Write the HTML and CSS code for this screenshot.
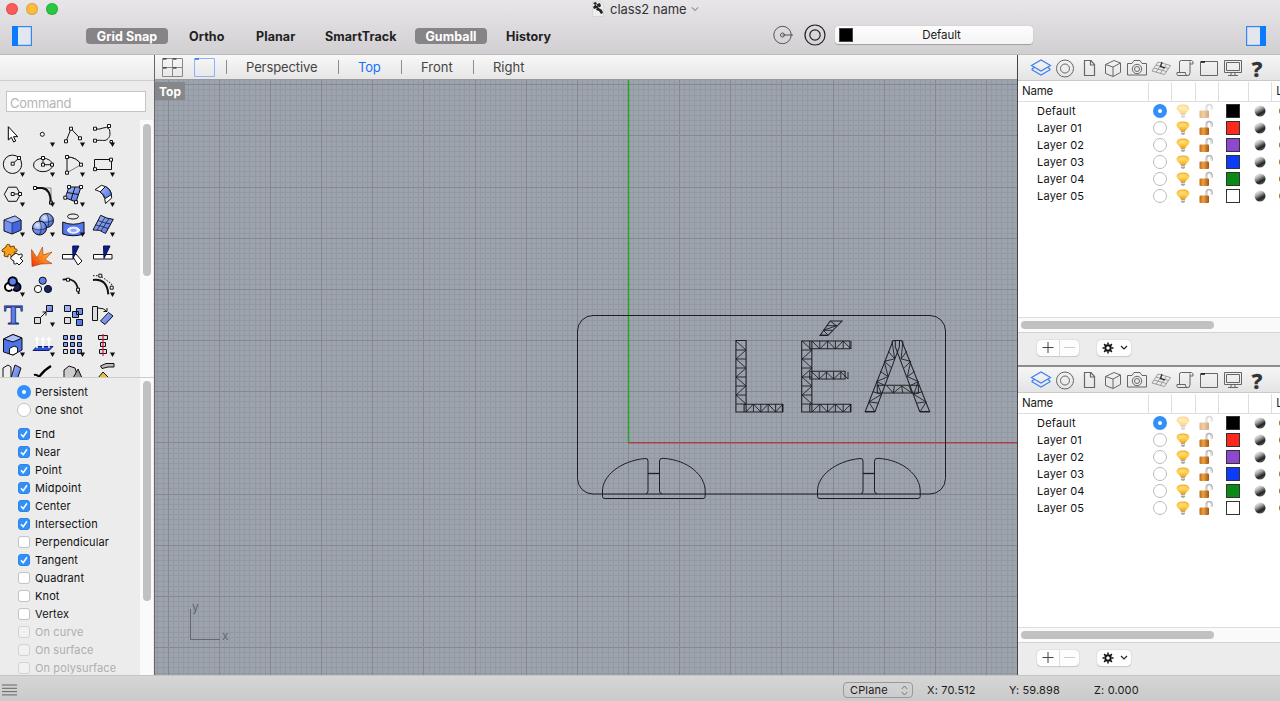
FILE: index.html
```html
<!DOCTYPE html>
<html lang="en">
<head>
<meta charset="utf-8">
<title>class2 name</title>
<link rel="stylesheet" href="styles.css">
</head>
<body>
<svg class="defs" width="0" height="0">
  <defs>
    <linearGradient id="blue" x1="0" y1="0" x2="1" y2="1"><stop offset="0" stop-color="#a9bcfb"/><stop offset="1" stop-color="#4a6ee8"/></linearGradient>
    <radialGradient id="ball" cx=".35" cy=".3" r=".8"><stop offset="0" stop-color="#dfe8ff"/><stop offset=".5" stop-color="#7594f0"/><stop offset="1" stop-color="#3f5fd0"/></radialGradient>
    <linearGradient id="fire" x1="0" y1="1" x2="1" y2="0"><stop offset="0" stop-color="#e8330c"/><stop offset=".5" stop-color="#ff8a1e"/><stop offset="1" stop-color="#ffc23a"/></linearGradient>
    <linearGradient id="sphere" x1=".2" y1="0" x2=".75" y2="1"><stop offset="0" stop-color="#fff"/><stop offset=".35" stop-color="#aaa"/><stop offset=".7" stop-color="#222"/><stop offset="1" stop-color="#666"/></linearGradient>
    <linearGradient id="glass" x1="0" y1="0" x2="0" y2="1"><stop offset="0" stop-color="#f9a51a"/><stop offset=".5" stop-color="#ffd658"/><stop offset="1" stop-color="#f7a21c"/></linearGradient>
    <linearGradient id="brass" x1="0" y1="0" x2="1" y2="0"><stop offset="0" stop-color="#c06a12"/><stop offset=".4" stop-color="#e9a04a"/><stop offset="1" stop-color="#a85408"/></linearGradient>
    <symbol id="bulb" viewBox="0 0 14 16"><path d="M7 1.500C3.400 1.500 .500 3 .500 5.600 .500 7.500 3.600 8.800 4.500 11H9.500C10.400 8.800 13.500 7.500 13.500 5.600 13.500 3 10.600 1.500 7 1.500Z" fill="url(#glass)"/><ellipse cx="6.500" cy="4.200" rx="4" ry="1.800" fill="#ffe9a0" opacity=".5"/><path d="M5 11h4v3L7 15 5 14Z" fill="#a3a3a3"/><path d="M5 12.500h4" stroke="#eee" stroke-width=".8"/></symbol>
    <symbol id="lock" viewBox="0 0 14 16"><path d="M7.500 8V4.500C7.500 .800 12.800 .800 12.800 4.500V6.500" fill="none" stroke="#b0b0b0" stroke-width="2"/><path d="M7.800 8V4.500C7.800 1.500 12.500 1.500 12.500 4.500V6" fill="none" stroke="#efefef" stroke-width=".8"/><rect x=".5" y="7.500" width="9.500" height="7.500" rx="1" fill="url(#brass)"/></symbol>
    <symbol id="tri" viewBox="0 0 30 30"><path d="M20 22.500h5l-2.500 4.500Z" fill="#111" stroke="none"/></symbol>
    <symbol id="gear" viewBox="0 0 12 12"><circle cx="6" cy="6" r="2.700" fill="none" stroke="#111" stroke-width="1.900"/><path d="M6 .5v2M6 9.500v2M.5 6h2M9.500 6h2M2.100 2.100l1.500 1.500M8.400 8.400l1.500 1.500M2.100 9.900l1.500-1.500M8.400 3.600l1.500-1.500" stroke="#111" stroke-width="1.500"/></symbol>
  </defs>
</svg>
<div class="app">
  <header class="titlebar">
    <div class="title-row">
      <div class="lights"><i class="red"></i><i class="yellow"></i><i class="green"></i></div>
      <div class="doc-title">
        <svg width="12" height="16" viewBox="0 0 12 16"><path d="M.5 .5h8l3 3v12H.5Z" fill="#eee" stroke="#ccc" stroke-width=".6"/><path d="M1 2l3-1 1 2 3-1 1 3-2 2 3 2 1 3-2 1-2-3-3-1 1-2-3 1-1-2 2-2Z" fill="#222"/><path d="M4 3l1 2M6 6l2 1" stroke="#ddd"/></svg>
        <span>class2 name</span>
        <svg class="chev" width="8" height="6" viewBox="0 0 8 6"><path d="M.8 1.300L4 4.500 7.200 1.300" fill="none" stroke="#999" stroke-width="1.200"/></svg>
      </div>
    </div>
    <div class="tool-row">
      <svg class="side-l" width="20" height="20"><rect x=".6" y=".6" width="18.800" height="18.800" fill="#e2e6ee" stroke="#3485f5" stroke-width="1.200"/><rect width="6" height="20" fill="#0a7aff"/></svg>
      <div class="modes">
        <b class="pill w82">Grid Snap</b><b class="ortho">Ortho</b><b class="planar">Planar</b><b class="smart">SmartTrack</b><b class="pill w72">Gumball</b><b class="hist">History</b>
      </div>
      <svg class="circ-a" width="22" height="20" viewBox="0 0 22 20" fill="none" stroke="#555"><circle cx="9.500" cy="10" r="8.700"/><circle cx="9.500" cy="10" r="2"/><path d="M9.500 10h10.500"/></svg>
      <svg class="circ-b" width="22" height="22" viewBox="0 0 22 22" fill="none" stroke="#222" stroke-width="1.200"><circle cx="11" cy="11" r="10"/><circle cx="11" cy="11" r="5.200"/></svg>
      <div class="layer-pop"><i></i><span>Default</span></div>
      <svg class="side-r" width="20" height="20"><rect x=".6" y=".6" width="18.800" height="18.800" fill="#e2e6ee" stroke="#3485f5" stroke-width="1.200"/><rect x="14" width="6" height="20" fill="#0a7aff"/></svg>
    </div>
  </header>

  <main class="body">
    <aside class="left">
      <div class="left-top"></div>
      <div class="cmd-wrap"><div class="cmd">Command</div></div>
      <div class="tools-wrap">
        <div class="tools">
          <svg viewBox="0 0 30 30"><path d="M8.300 6.700V20L11.300 17.300 13.700 22 15.700 21 13.500 16.700H17.700Z" fill="#fff" stroke="#000"/></svg>
          <svg viewBox="0 0 30 30"><circle cx="12.300" cy="14.300" r="2" fill="#fff" stroke="#111"/><use href="#tri"/></svg>
          <svg viewBox="0 0 30 30" class="ln"><path d="M6 21.300L11 8.700 20 18.300"/><path class="sq" d="M9.500 7.200h3v3h-3zM4.500 19.800h3v3h-3zM18.500 16.800h3v3h-3z"/><use href="#tri"/></svg>
          <svg viewBox="0 0 30 30" class="ln"><path d="M5 8.700Q9 10 13 8T19.500 9.500C20.500 15 20 17 17 19.500 15 21.500 11 19.500 5 20.700"/><path class="sq" d="M3.500 7.200h3v3h-3zM17.500 4.500h3v3h-3zM3.500 19.200h3v3h-3z"/><path class="sq" d="M20 20.500h2.500v2.500h-2.500z"/><use href="#tri"/></svg>

          <svg viewBox="0 0 30 30" class="ln"><circle cx="12.500" cy="14.300" r="9.200"/><path d="M12.700 13.700L19 8"/><path class="sq" d="M11.200 12.200h3v3h-3zM17.500 6.500h3v3h-3z"/><use href="#tri"/></svg>
          <svg viewBox="0 0 30 30" class="ln"><ellipse cx="13" cy="15" rx="9.500" ry="6.700"/><path d="M13 8v6.700h9"/><path class="sq" d="M11.500 6.500h3v3h-3zM11.500 13.200h3v3h-3zM20.500 13.200h3v3h-3z"/><use href="#tri"/></svg>
          <svg viewBox="0 0 30 30" class="ln"><path d="M7 7V22.700"/><path d="M7 7Q17 7 21 14.700L7 22.700" stroke="#777"/><path d="M7 7Q17 7 21 14.700"/><path class="sq" d="M5.500 5.500h3v3h-3zM19.500 13.200h3v3h-3zM5.500 21.200h3v3h-3z"/><use href="#tri"/></svg>
          <svg viewBox="0 0 30 30" class="ln"><path d="M4.500 9.500h17v10h-17z"/><path class="sq" d="M19.500 8.200h3v3h-3zM3.500 17.700h3v3h-3z"/><use href="#tri"/></svg>

          <svg viewBox="0 0 30 30" class="ln"><path d="M4.300 14.300L8.300 7.200H16.500L20.500 14.300 16.500 21.300H8.300Z"/><path d="M12.700 14h7"/><path class="sq" d="M11.200 12.500h3v3h-3zM18.500 12.500h3v3h-3z"/><use href="#tri"/></svg>
          <svg viewBox="0 0 30 30" class="ln"><path d="M5 8H21V22" stroke="#888"/><path d="M5 8H12Q20.500 9 20.700 22" stroke-width="2"/><path class="sq" d="M3.500 6.500h3v3h-3zM19.500 21.200h3v3h-3z"/><use href="#tri"/></svg>
          <svg viewBox="0 0 30 30" class="ln"><path d="M9 7H21L16 22 5.300 17.700Z" fill="url(#blue)"/><path d="M15 7L11 20M7 12.500L18.500 14.500"/><path class="sq" d="M7.500 5.500h3v3h-3zM19.500 5.500h3v3h-3zM14.500 20.700h3v3h-3zM3.800 16.200h3v3h-3z"/><use href="#tri"/></svg>
          <svg viewBox="0 0 30 30" class="ln"><path d="M5 9.700L11.300 5.300Q22 7 21.700 18L15.500 23.500Q15 12 5 9.700Z" fill="#fff"/><path d="M10 12L15.500 6.500Q21 9.500 21.500 14.500L15.300 18.500Q14 14 10 12Z" fill="url(#blue)"/><use href="#tri"/></svg>

          <svg viewBox="0 0 30 30" class="ln"><path d="M4 10L15 6 21 10V20L12 24 4 21Z" fill="#7391f3"/><path d="M12 13L21 10V20L12 24Z" fill="#4264df" stroke-width=".6"/><path d="M4 10L12 13 21 10L15 6Z" fill="#a8bbfb" stroke-width=".6"/><use href="#tri"/></svg>
          <svg viewBox="0 0 30 30" class="ln"><circle cx="16.500" cy="10.500" r="7" fill="url(#ball)"/><circle cx="9.500" cy="18" r="7" fill="url(#ball)"/><path d="M2.500 18Q9 22 16.500 18M9.500 11Q13 17 9.500 25M10 11Q17 14 23.500 10M16.500 3.500Q20 9 18 17" stroke-width=".6"/><use href="#tri"/></svg>
          <svg viewBox="0 0 30 30" class="ln"><ellipse cx="13" cy="6.500" rx="5.500" ry="2.500"/><path d="M2.700 12Q13 16.500 24 12V24Q13 27.500 2.700 24Z" fill="#5478ef"/><ellipse cx="13.500" cy="20.200" rx="6" ry="3" fill="#dce5ff" stroke="#fff"/><ellipse cx="13.500" cy="20.200" rx="3" ry="1.500" fill="#89a3f4" stroke="none"/><use href="#tri"/></svg>
          <svg viewBox="0 0 30 30" class="ln"><path d="M10.700 5.300Q17 9 23.300 9.300L15.500 23.500Q10 19 3 20Z" fill="url(#blue)"/><path d="M15 7.500L7 20M19 8.500L11 21M8 10.500Q14 13 20.500 14M5.500 15Q12 16 18 18.500" stroke-width=".7"/><use href="#tri"/></svg>

          <svg viewBox="0 0 30 30" class="ln"><path d="M3 9L6 7Q6 3 10 5L10 7 14 6 15 9Q19 9 16 12L14 12 15 16 11 17Q11 13 8 15L8 17 4 16 5 12Q0 12 3 9Z" fill="#f9a11b" stroke="#7a4100"/><path d="M12 16L16 13 19 15Q23 12 22 17L20 18 23 21 19 25 17 23Q13 26 14 21L12 20Q9 18 12 16Z" fill="#fff"/></svg>
          <svg viewBox="0 0 30 30"><path d="M1.500 9.500L7 18 12.500 7 13 15 22 12 15 19.500 22 23.500 11 24 2 26.500Z" fill="url(#fire)" stroke="#a8330a" stroke-width=".6"/></svg>
          <svg viewBox="0 0 30 30" class="ln"><path d="M2.500 14.500h11v4.500H2.500zM13 17L16 14 22 21 18 25Z" fill="#fff"/><path d="M12.700 6H19L13 18.500Z" fill="#0e1d8a" stroke="#071050"/></svg>
          <svg viewBox="0 0 30 30" class="ln"><path d="M3.500 14.500h18.500v4.500H3.500z" fill="#fff"/><path d="M13.500 6H20L14 18.500Z" fill="#0e1d8a" stroke="#071050"/></svg>

          <svg viewBox="0 0 30 30"><g stroke="#000" stroke-width="2"><circle cx="9" cy="17" r="4" fill="#fff"/><circle cx="16.500" cy="17" r="4" fill="#15246f"/><circle cx="12.700" cy="11.500" r="4.200" fill="#5b80f0"/></g><path d="M10.500 16.500h4l-2 3.500Z" fill="#fff"/><use href="#tri"/></svg>
          <svg viewBox="0 0 30 30" class="ln"><circle cx="12.700" cy="10.700" r="3.600" fill="#5b7ff0"/><circle cx="8" cy="19" r="3.600" fill="#fff"/><circle cx="18" cy="19" r="3.600" fill="#14236f"/></svg>
          <svg viewBox="0 0 30 30" class="ln"><path d="M2.700 9.700Q17.500 6 18.700 24" stroke-width="1.800"/><path class="sq" d="M6.500 8.200h3v3h-3zM16.500 18.200h3v3h-3z"/></svg>
          <svg viewBox="0 0 30 30" class="ln"><path d="M3 10Q17 8 18.300 24.300" stroke-width="2"/><path d="M3 5.700H10.300L21.700 14V18" stroke-dasharray="1.500 1.500"/><path class="sq" d="M8.800 4.200h3v3h-3zM20.200 16.200h3v3h-3z"/><use href="#tri"/></svg>

          <svg viewBox="0 0 30 30"><text x="4" y="24" class="tee">T</text></svg>
          <svg viewBox="0 0 30 30" class="ln"><path d="M4.500 17.500h6v6h-6z" fill="#ddd"/><path d="M16.500 5.500h6v6h-6z" fill="url(#blue)"/><path d="M11 17L16 12M12.500 12H16V15.500"/><use href="#tri"/></svg>
          <svg viewBox="0 0 30 30" class="ln"><path d="M4.500 5.500h6v6h-6zM16.500 8.500h6v6h-6zM12.500 11.500h6v6h-6zM16.500 19.500h6v6h-6z" fill="url(#blue)"/><path d="M4.500 17.500h6v6h-6z" fill="#ddd"/></svg>
          <svg viewBox="0 0 30 30" class="ln"><path d="M2.500 6.500h5v14h-5z" fill="#ddd"/><path d="M10.500 21L18.500 12.500 23 16 15 24.500Z" fill="url(#blue)"/><path d="M8 8Q14 8 16.500 11M17 8v3.500h-3.500"/></svg>

          <svg viewBox="0 0 30 30" class="ln"><path d="M3.500 9L13 4.500 22 8V20L13 25 3.500 22Z" fill="#4e73ea"/><path d="M3.500 9L13 4.500 22 8 13 12Z" fill="#b0c2fc"/><path d="M9.500 18.500L14 16 17.500 17.500V22.500L13 25 9.500 24Z" fill="#fff"/><use href="#tri"/></svg>
          <svg viewBox="0 0 30 30"><path d="M3 20.500L7 16.500H23L19 20.500Z" fill="#2e52d9" stroke="#101c70"/><path d="M7 18V9M13 18V9M19 18V9" stroke="#fff" stroke-width="1.500"/><path d="M4.500 10L7 6.500 9.500 10ZM10.500 10L13 6.500 15.500 10ZM16.500 10L19 6.500 21.500 10Z" fill="#fff"/><use href="#tri"/></svg>
          <svg viewBox="0 0 30 30" class="ln"><path d="M3.500 5.500h4v4h-4zM10.500 5.500h4v4h-4zM17.500 5.500h4v4h-4zM3.500 12.500h4v4h-4zM10.500 12.500h4v4h-4zM17.500 12.500h4v4h-4zM10.500 19.500h4v4h-4zM17.500 19.500h4v4h-4z" fill="#7b99f5"/><path d="M3.500 19.500h4v4h-4z" fill="#ddd"/><use href="#tri"/></svg>
          <svg viewBox="0 0 30 30" class="ln"><path d="M8.500 5.500h9v4h-9zM10.500 12.500h5v4h-5zM9.500 19.500h7v4h-7z" fill="#ddd"/><path d="M13 4V26" stroke="#d8182c" stroke-width="1.200"/><use href="#tri"/></svg>

          <svg viewBox="0 0 30 30" class="ln"><path d="M3 20V8L8 5 11 7V20Z" fill="#eee"/><path d="M11 18L15 5 21 8 17 20Z" fill="url(#blue)"/></svg>
          <svg viewBox="0 0 30 30"><path d="M4 15Q7 14 9 17 14 10 21 6" fill="none" stroke="#000" stroke-width="2.200"/></svg>
          <svg viewBox="0 0 30 30" class="ln"><path d="M4 18V10L9 6 15 8 18 18Z" fill="#ccc"/><path d="M13 18L18 9 22 18Z" fill="#999"/></svg>
          <svg viewBox="0 0 30 30" class="ln"><path d="M10.500 6L16 3.500H24V7H18L12 8.500Z" fill="#bbb"/><path d="M8 18L13 12 19 18Z" fill="#f1bd2c"/></svg>
        </div>
        <div class="track"><i class="thumb t1"></i></div>
      </div>
      <div class="osnap">
        <div class="snaps" id="snaps"></div>
        <div class="track"><i class="thumb t2"></i></div>
      </div>
    </aside>

    <section class="center">
      <nav class="views">
        <svg class="four" width="21" height="19" viewBox="0 0 21 19"><path d="M.5 .5h20v18H.5zM10.500 .5v18M.5 9.500h20" fill="none" stroke="#888"/><path d="M1 1h3.500M11 1h3.500M1 10h3.500M11 10h3.500" stroke="#111" stroke-width="1.200"/></svg>
        <svg class="one" width="21" height="19" viewBox="0 0 21 19"><path d="M.5 .5h20v18H.5z" fill="none" stroke="#8db2f8"/><path d="M1 1h4" stroke="#2470f5" stroke-width="1.500"/></svg>
        <i class="bar b1"></i><span class="v1">Perspective</span><i class="bar b2"></i><span class="v2">Top</span><i class="bar b3"></i><span class="v3">Front</span><i class="bar b4"></i><span class="v4">Right</span>
      </nav>
      <div class="viewport">
        <svg class="scene" viewBox="155 80 862 595">
          <g id="grid"></g>
          <path d="M628.500 80V442" stroke="#27a327" stroke-width="1.500"/>
          <path d="M628 442.700H1017" stroke="#a94248" stroke-width="1.600"/>
          <g fill="none" stroke="#1c1f22">
            <rect x="577.500" y="315.500" width="368" height="178.500" rx="15.500"/>
            <g id="wheel"><path d="M648 491V461Q648 458 645 458.500C620 461 602.500 476 602.500 491V496.500Q602.500 498.500 605 498.500H703Q705.200 498.500 705.200 496.500V491C705.200 476 689 460 663 458.300Q659.500 458 659.500 461V491Q659.500 493.500 662 493.500"/><path d="M648 491Q648 493.500 646 493.500"/><path d="M648 473.500H659.500" stroke-width="1.300"/></g>
            <use href="#wheel" x="215"/>
          </g>
          <g class="wire">
            <text transform="translate(727 412.300) scale(1.080 1)">L</text>
            <text transform="translate(792.800 412.300) scale(1.080 1)">É</text>
            <text transform="translate(863.800 412.300) scale(1.030 1)">A</text>
          </g>
          <path id="struts" fill="none" stroke="#1c1f22" stroke-width=".9"/>
          <path d="M190.500 609V639.500H220" fill="none" stroke="#64686c"/>
          <text class="ax" x="192" y="611">y</text><text class="ax" x="222" y="640">x</text>
        </svg>
        <span class="vp-label">Top</span>
      </div>
    </section>

    <aside class="right" id="right"></aside>
  </main>

  <footer class="status">
    <svg class="lines" width="15" height="12"><path d="M0 1h15M0 4.300h15M0 7.600h15M0 10.900h15" stroke="#666"/></svg>
    <div class="cplane"><span>CPlane</span><svg width="7" height="11" viewBox="0 0 7 11"><path d="M.8 4L3.500 1 6.200 4M.8 7L3.500 10 6.200 7" fill="none" stroke="#777"/></svg></div>
    <span class="cx">X: 70.512</span><span class="cy">Y: 59.898</span><span class="cz">Z: 0.000</span>
  </footer>
</div>

<template id="panel">
  <section class="panel">
    <div class="tabs">
      <svg viewBox="0 0 24 24" class="on"><path d="M2.500 9.500L12 4 21.500 9.500 12 15ZM2.500 13.500L12 19 21.500 13.500M5 11.500L2.500 13.500M19 11.500l2.500 2"/></svg>
      <svg viewBox="0 0 24 24"><circle cx="12" cy="12.500" r="8.500"/><circle cx="12" cy="12.500" r="4.500"/></svg>
      <svg viewBox="0 0 24 24"><path d="M7.500 4.500H14L17.500 8.500V19.500H7.500ZM13.500 4.500V9H17.500" stroke-width="1.200"/></svg>
      <svg viewBox="0 0 24 24"><path d="M4.500 8.500L13 4.500 19.500 7V16.500L12 20.500 4.500 17.500ZM4.500 8.500L12 11 19.500 7M12 11V20.500"/></svg>
      <svg viewBox="0 0 24 24"><path d="M2.500 7.500H7L9 4.500H15L17 7.500H21.500V19H2.500Z"/><circle cx="12" cy="13" r="4.700"/><circle cx="12" cy="13" r="2.500"/></svg>
      <svg viewBox="0 0 24 24"><path d="M9 6L21.500 9.500 15.500 18.500 3 15ZM13.200 7.200L7 16.200M17.500 8.400L11.300 17.400M7 9L19.500 12.500M5 12L17.500 15.500" stroke="#888" stroke-width=".8"/><path d="M13 6L11.500 10.500 16 12" stroke="#222" stroke-width="1.200"/></svg>
      <svg viewBox="0 0 24 24"><path d="M6.500 16V6Q6.500 4.500 8.500 4.500H18.500Q20.500 5 20 8H17V17Q17 20 14 19.500H5Q3 19 4 16.500H12.500Q12 19 14 19.500M17 8V5.500"/></svg>
      <svg viewBox="0 0 24 24"><path d="M3.500 5.500H20.500V19.500H3.500Z"/><path d="M4 6h4" stroke="#111" stroke-width="1.500"/></svg>
      <svg viewBox="0 0 24 24"><path d="M3.500 4.500H20.500V16.500H3.500ZM5.500 6.500H18.500V14.500H5.500ZM10 16.500V19M14 16.500V19M7 19.500H17"/></svg>
      <b>?</b>
    </div>
    <div class="cols"><span>Name</span><i></i><i></i><i></i><i class="wide"></i><i></i><em>L</em></div>
    <div class="rows"></div>
    <div class="hscroll"><i></i></div>
    <div class="foot">
      <div class="pm"><svg width="22" height="16"><path d="M5.500 7.500h11M11 2v11" stroke="#444"/></svg><svg width="20" height="16"><path d="M4 7.500h11" stroke="#ccc"/></svg></div>
      <div class="act"><svg width="12" height="12"><use href="#gear"/></svg><svg width="8" height="6"><path d="M1 1l3 3 3-3" fill="none" stroke="#222" stroke-width="1.200"/></svg></div>
    </div>
  </section>
</template>
<script src="app.js"></script>
</body>
</html>
```
FILE: styles.css
```css
* { box-sizing: border-box; }
body { margin: 0; font: 11px Inter, "Liberation Sans", sans-serif; color: #1b1b1b; overflow: hidden; }
svg { display: block; flex: none; }
i, em { font-style: normal; flex: none; }
.defs { position: absolute; }
.app { width: 1280px; height: 701px; display: flex; flex-direction: column; }

.titlebar { height: 55px; flex: none; background: linear-gradient(#e8e6e8, #d1cfd1); border-bottom: 1px solid #bdbbbd; }
.title-row { height: 18px; display: flex; align-items: center; }
.lights { display: flex; gap: 8px; padding-left: 6px; width: 592px; margin-top: -1px; }
.lights i { width: 12px; height: 12px; border-radius: 50%; border: .5px solid rgba(0,0,0,.15); }
.red { background: #fc5b57; } .yellow { background: #fdbc40; } .green { background: #28c840; }
.doc-title { display: flex; align-items: center; gap: 6px; font-size: 13px; color: #333; letter-spacing: -.05px; }
.chev { margin-left: -2px; }
.tool-row { display: flex; height: 36px; align-items: center; }
.side-l { margin-left: 12px; }
.modes { display: flex; align-items: center; margin-left: 54px; width: 687px; font-size: 13px; }
.modes b { font-weight: 650; font-size: 12.500px; color: #222; white-space: nowrap; letter-spacing: .08px; }
.modes .pill { background: #868486; color: #fff; border-radius: 4px; height: 16px; line-height: 17px; text-align: center; margin-top: -1px; }
.w82 { width: 82px; } .w72 { width: 72px; }
.ortho { margin-left: 21px; width: 67px; } .planar { width: 69px; } .smart { width: 90px; } .hist { margin-left: 19px; }
.circ-a { margin-top: -2px; } .circ-b { margin: -2px 0 0 9px; }
.layer-pop { width: 198px; height: 18px; margin: -2px 0 0 9px; background: linear-gradient(#fdfdfd, #f4f4f4); border-radius: 4px; box-shadow: 0 .5px 1px rgba(0,0,0,.25); display: flex; align-items: center; font-size: 11.500px; padding-left: 4px; }
.layer-pop i { width: 14px; height: 14px; background: #000; border: 1px solid #444; }
.layer-pop span { width: 174px; text-align: center; padding-left: 3px; letter-spacing: -.1px; }
.side-r { margin-left: 213px; }

.body { height: 620px; display: flex; }
.left { width: 154px; background: #ececec; display: flex; flex-direction: column; }
.left-top { height: 26px; background: linear-gradient(#f8f8f8, #ebebeb); border-bottom: 1px solid #cfcfcf; }
.cmd-wrap { height: 39px; padding: 10px 0 0 6px; }
.cmd { width: 140px; height: 21px; background: #fff; border: 1px solid #c4c4c4; color: #b5b5b5; font-size: 13px; line-height: 22px; padding-left: 3px; letter-spacing: -.25px; }
.tools-wrap { height: 258px; display: flex; border-bottom: 1px solid #cdcdcd; }
.tools { width: 140px; display: grid; grid-template-columns: repeat(4, 30px); grid-auto-rows: 30px; overflow: hidden; }
.tools svg { width: 30px; height: 30px; }
.ln { fill: none; stroke: #111; stroke-width: 1; }
.sq { fill: #fff; }
.tee { font: bold 28px "Liberation Serif", serif; fill: #5b80f0; stroke: #15246f; stroke-width: .8px; }
.track { width: 13px; background: #fafafa; }
.thumb { display: block; width: 8px; margin-left: 3px; border-radius: 4px; background: #c1c1c1; }
.t1 { height: 152px; margin-top: 4px; } .t2 { height: 220px; margin-top: 3px; }
.osnap { flex: 1; display: flex; overflow: hidden; }
.snaps { width: 140px; padding: 6px 0 0 17px; display: flex; flex-direction: column; }
.snap { height: 18px; flex: none; display: flex; align-items: center; gap: 4px; letter-spacing: .12px; white-space: nowrap; color: #111; }
.snap:nth-child(-n+2) { margin-top: -1px; margin-bottom: 1px; }
.snap:nth-child(3) { margin-top: 5px; }
.snap i { width: 12px; height: 12px; border-radius: 3px; background: #fff; border: 1px solid #c3c3c3; margin: 0 1px; }
.snap.on i { background: #3290f8; border-color: #2b84ea; }
.snap.radio i { width: 14px; height: 14px; border-radius: 50%; margin: 0; }
.snap.radio.on i { background: #fff; border: 5px solid #3290f8; }
.snap.off { color: #aeaeae; } .snap.off i { background: #f1f1f1; border-color: #d2d2d2; }

.center { width: 864px; display: flex; flex-direction: column; border-left: 1px solid #666; border-right: 1px solid #444; }
.views { height: 25px; display: flex; align-items: center; background: linear-gradient(#f8f8f8, #e6e6e6); border-bottom: 1px solid #999; font-size: 13px; color: #444; }
.four { margin-left: 7px; } .one { margin-left: 11px; }
.bar { width: 1px; height: 14px; background: #8c8c8c; }
.b1 { margin-left: 11px; }
.v1 { width: 92px; margin-left: 19px; letter-spacing: -.1px; } .v2 { width: 43px; margin-left: 19px; color: #1570fb; letter-spacing: -.2px; } .v3 { width: 52px; margin-left: 19px; } .v4 { margin-left: 19px; }
.viewport { height: 595px; position: relative; background: #9ca3ac; }
.scene { width: 862px; height: 595px; }
.vp-label { position: absolute; left: 0; top: 2px; width: 30px; height: 18px; background: #858789; color: #fff; font: 650 12px/19px Inter, sans-serif; padding-left: 4px; }
.wire { font: 100px Roboto, sans-serif; fill: none; stroke: #1c1f22; stroke-width: 1px; }
.ax { font: 12px Inter, sans-serif; fill: #64686c; }

.right { width: 262px; background: #fff; overflow: hidden; }
.panel { height: 308px; display: flex; flex-direction: column; }
.panel:first-child { height: 312px; border-bottom: 2px solid #8d8d8d; }
.tabs { height: 26px; flex: none; display: flex; padding: 1px 0 0 11px; background: linear-gradient(#f6f6f6, #e4e4e4); border-bottom: 1px solid #c9c9c9; }
.tabs svg { width: 24px; height: 24px; fill: none; stroke: #666; stroke-width: 1; }
.tabs svg.on { stroke: #3d7ff5; stroke-width: 1.200; }
.tabs b { font: 700 22px/25px "Noto Sans", sans-serif; width: 24px; text-align: center; color: #333; -webkit-text-stroke: .5px #333; }
.cols { height: 21px; flex: none; display: flex; align-items: center; border-bottom: 1px solid #dedede; padding-left: 4px; font-size: 11.500px; }
.cols span { width: 126px; flex: none; letter-spacing: -.2px; }
.cols i { width: 23.300px; height: 19px; border-left: 1px solid #dedede; } .cols .wide { width: 30px; }
.cols em { border-left: 1px solid #dedede; height: 19px; line-height: 19px; padding-left: 4px; }
.rows { flex: 1; }
.row { height: 17px; display: flex; align-items: center; padding-left: 19px; letter-spacing: .22px; color: #111; }
.row span { width: 116px; flex: none; }
.row .rad { width: 14px; height: 14px; border-radius: 50%; border: 1px solid #bbb; background: #fff; }
.row.cur .rad { border: 5px solid #3290f8; }
.row svg.g { width: 14px; height: 16px; margin-left: 9px; }
.row .sw { width: 14px; height: 14px; border: 1px solid #333; margin-left: 13px; }
.row .sp { margin-left: 14px; } .row .mt { margin-left: 12px; }
.cur .g { opacity: .5; }
.hscroll { height: 16px; flex: none; border-top: 1px solid #ddd; border-bottom: 1px solid #d4d4d4; background: #fafafa; padding: 3px 0 0 3px; }
.hscroll i { display: block; width: 193px; height: 8px; border-radius: 4px; background: #c1c1c1; }
.foot { height: 32px; flex: none; background: #ececec; display: flex; padding: 7px 0 0 19px; gap: 18px; }
.pm, .act { height: 16px; display: flex; align-items: center; background: #fdfdfd; border-radius: 4px; box-shadow: 0 0 1px rgba(0,0,0,.35), 0 1px 1px rgba(0,0,0,.12); }
.pm svg + svg { border-left: 1px solid #ddd; }
.act { width: 34px; padding-left: 5px; gap: 6px; }

.status { height: 26px; flex: none; background: linear-gradient(#d6d6d6, #cacaca); border-top: 1px solid #c4c4c4; display: flex; align-items: center; padding-top: 3px; letter-spacing: .15px; }
.lines { margin-left: 2px; }
.cplane { margin-left: 826px; width: 70px; height: 16px; border: 1px solid #999; border-radius: 4px; display: flex; align-items: center; padding: 0 4px 0 6px; justify-content: space-between; }
.cx { margin-left: 14px; width: 82px; } .cy { width: 85px; }
```
FILE: app.js
```js
const $ = id => document.getElementById(id);

// Object snap options
const snaps = [["Persistent","radio on"],["One shot","radio"],["End","on"],["Near","on"],["Point","on"],["Midpoint","on"],["Center","on"],["Intersection","on"],["Perpendicular",""],["Tangent","on"],["Quadrant",""],["Knot",""],["Vertex",""],["On curve","off"],["On surface","off"],["On polysurface","off"]];
const check = '<svg width="10" height="10" viewBox="0 0 10 10"><path d="M2 5.300L4.200 7.700 8 2.300" fill="none" stroke="#fff" stroke-width="1.500"/></svg>';
$("snaps").innerHTML = snaps.map(([n, c]) => `<div class="snap ${c}"><i>${c === "on" ? check : ""}</i>${n}</div>`).join("");

// Layer panels
const layers = [["Default","#000"],["Layer 01","#fb281b"],["Layer 02","#8e48cf"],["Layer 03","#0c3cf8"],["Layer 04","#088a14"],["Layer 05","#fff"]];
const rows = layers.map(([n, c], i) => `<div class="row${i ? "" : " cur"}"><span>${n}</span><i class="rad"></i><svg class="g"><use href="#bulb"/></svg><svg class="g"><use href="#lock"/></svg><i class="sw" style="background:${c}"></i><svg class="sp" width="12" height="12"><circle cx="6" cy="6" r="5.500" fill="url(#sphere)"/></svg><svg class="mt" width="12" height="12"><circle cx="6" cy="6" r="5" fill="#a06a28"/></svg></div>`).join("");
for (let i = 0; i < 2; i++) {
  const p = $("panel").content.cloneNode(true);
  p.querySelector(".rows").innerHTML = rows;
  $("right").append(p);
}

// Construction plane grid
const step = 5.115, ox = 628, oy = 442.4;
let minor = "", major = "";
for (let k = -93; k <= 77; k++) {
  const x = Math.round(ox + k * step) + .5, y = Math.round(oy + k * step) + .5;
  const v = x > 154 && x < 1017 ? `M${x} 80V675` : "", h = y > 80 && y < 675 ? `M154 ${y}H1017` : "";
  if (k % 10) minor += v + h; else major += v + h;
}
$("grid").innerHTML = `<path d="${minor}" stroke="#9299a2"/><path d="${major}" stroke="#848890"/>`;

// Zigzag bracing between two rails
function truss(ax, ay, bx, by, cx, cy, dx, dy, n) {
  let d = "";
  const at = (x0, y0, x1, y1, t) => `${(x0 + (x1 - x0) * t).toFixed(1)} ${(y0 + (y1 - y0) * t).toFixed(1)}`;
  for (let i = 0; i < n; i++) {
    const s = i / n, e = (i + 1) / n;
    d += `M${at(ax, ay, bx, by, e)}L${at(cx, cy, dx, dy, e)}`;
    d += i % 2 ? `M${at(cx, cy, dx, dy, s)}L${at(ax, ay, bx, by, e)}` : `M${at(ax, ay, bx, by, s)}L${at(cx, cy, dx, dy, e)}`;
  }
  return d;
}
$("struts").setAttribute("d", [
  truss(736, 341, 736, 404, 746, 341, 746, 404, 7), truss(746, 412, 783, 412, 746, 404, 783, 404, 5),
  truss(802, 341, 802, 404, 812, 341, 812, 404, 7), truss(812, 341, 851, 341, 812, 349, 851, 349, 5),
  truss(812, 372, 848, 372, 812, 379, 848, 379, 5), truss(812, 412, 851, 412, 812, 404, 851, 404, 5),
  truss(892, 341, 865, 412, 898, 350, 875, 412, 7), truss(903, 341, 930, 412, 898, 350, 920, 412, 7),
  truss(887, 386, 909, 386, 884, 393, 912, 393, 3), truss(830, 321, 820, 335, 841, 321, 828, 335, 3)
].join(""));
```
